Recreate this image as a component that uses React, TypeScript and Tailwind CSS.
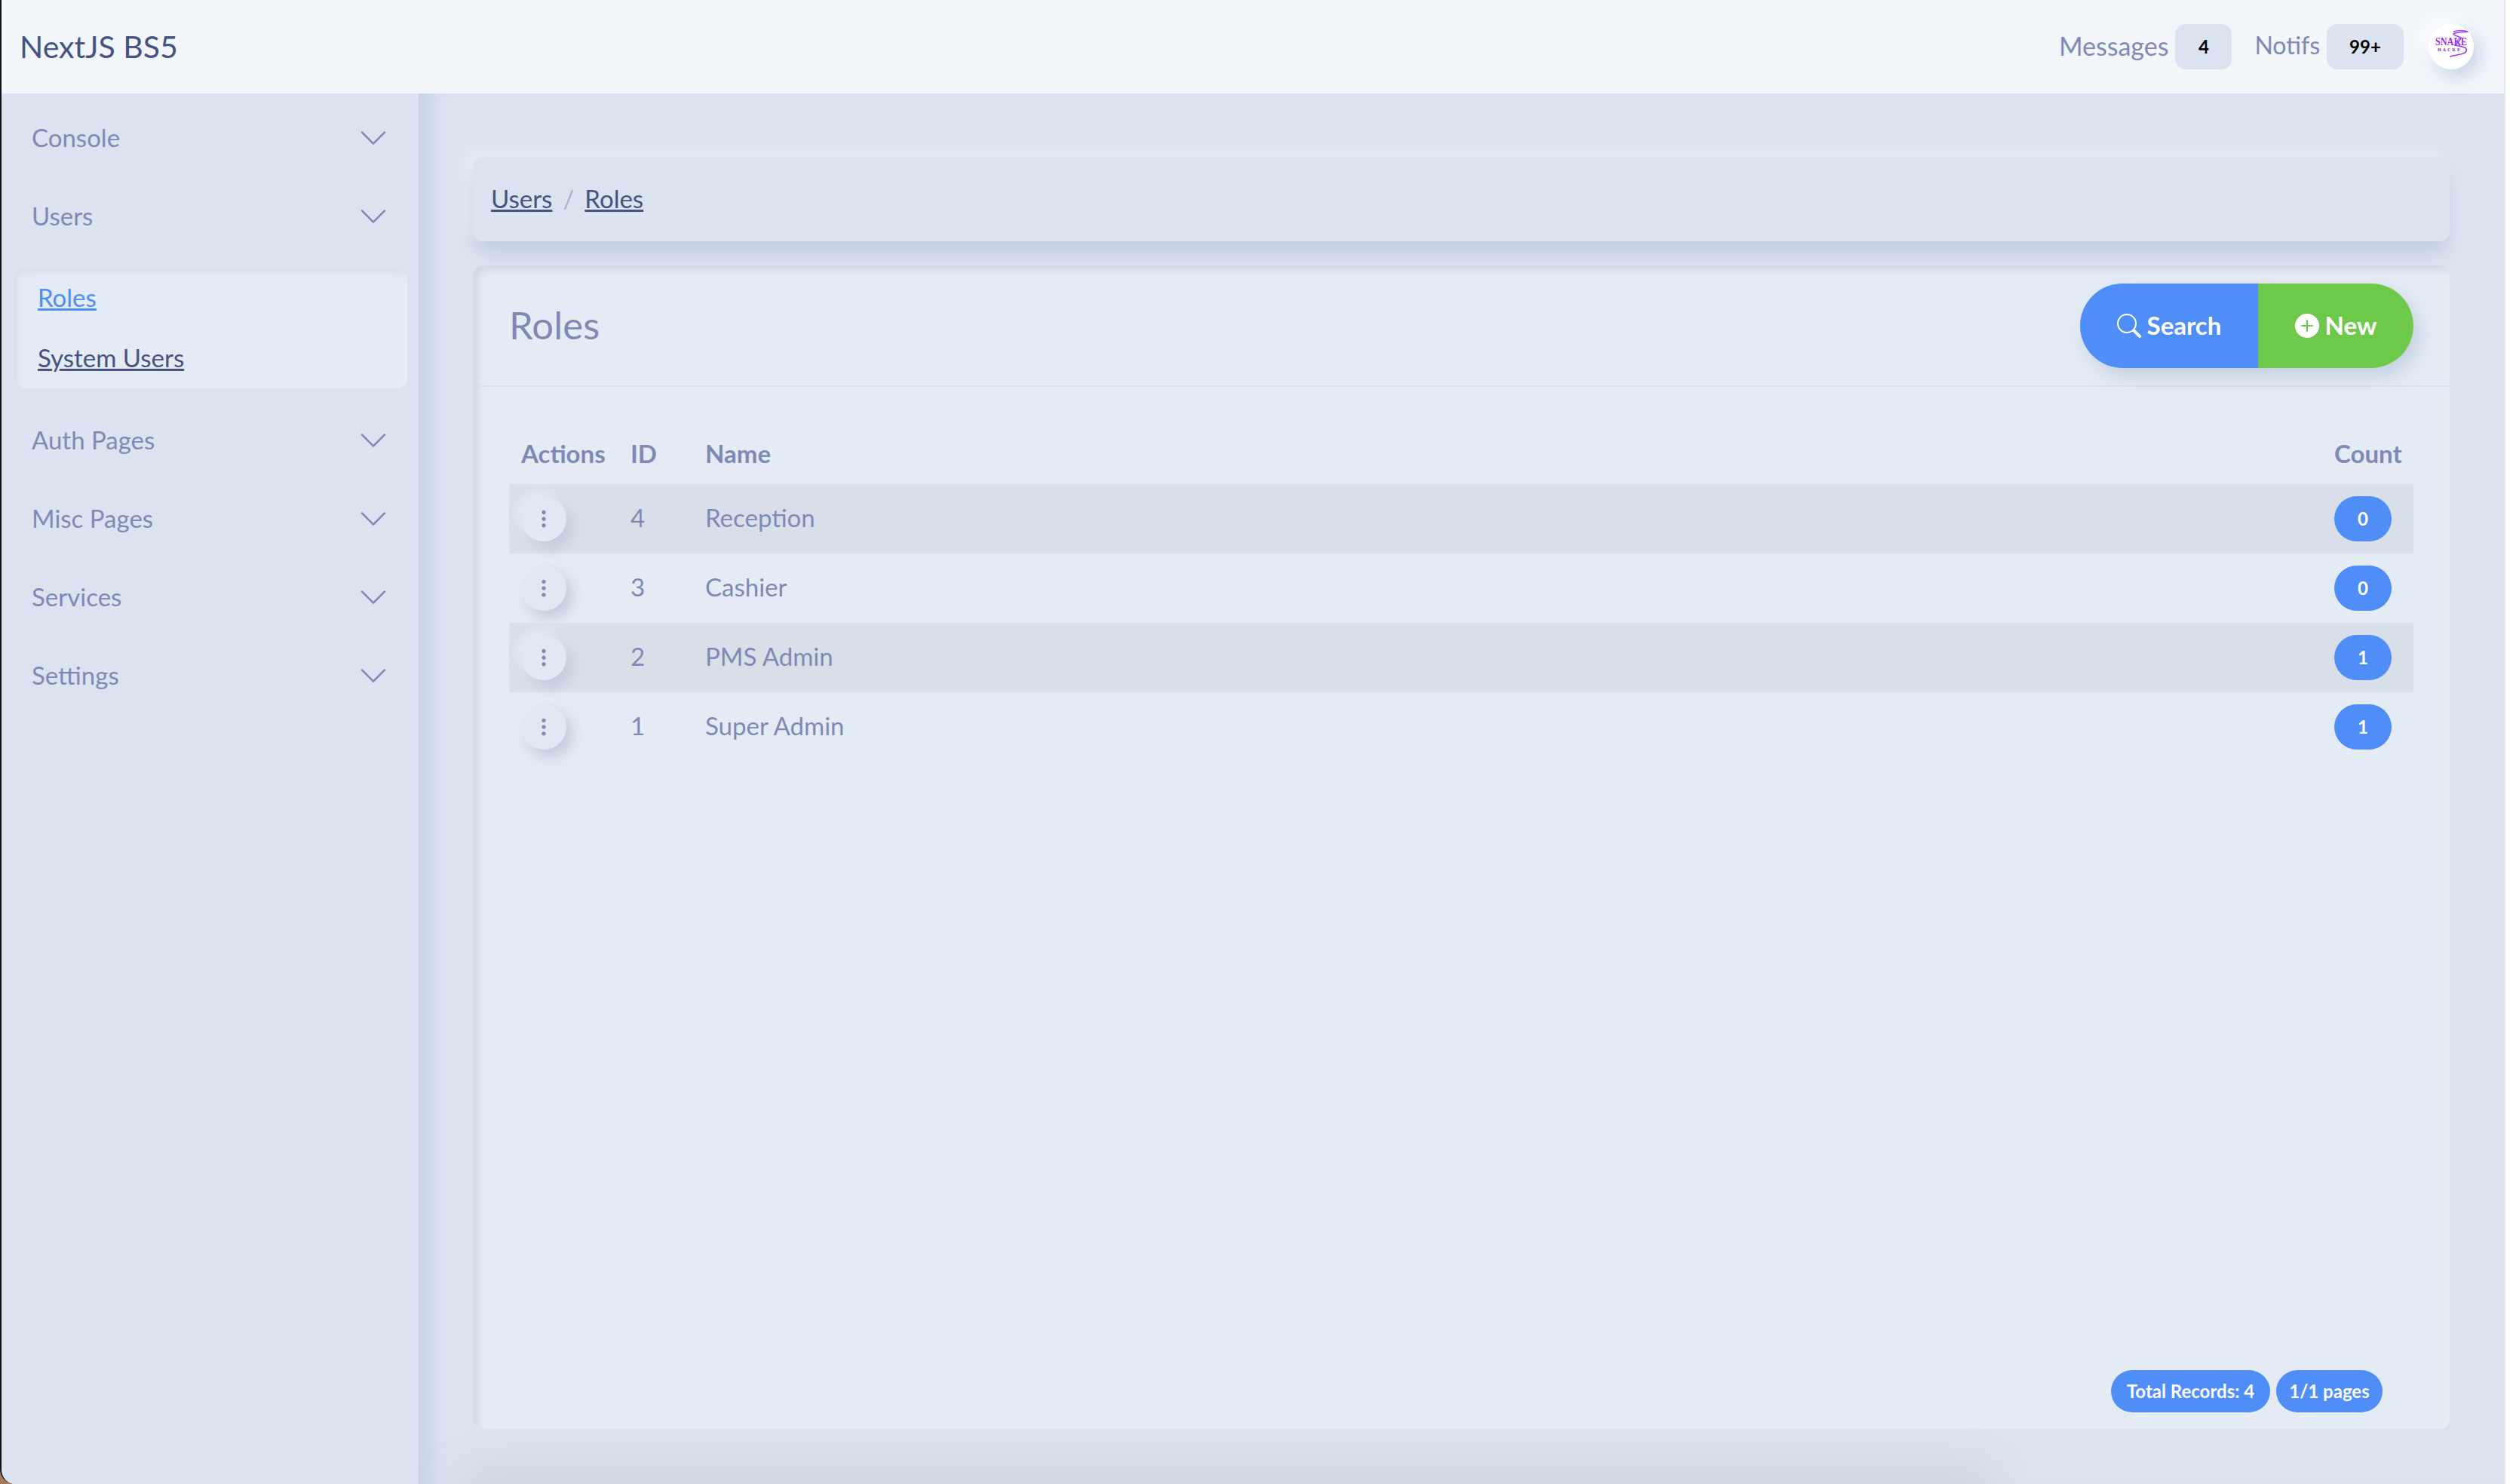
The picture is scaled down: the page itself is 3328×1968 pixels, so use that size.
import React from 'react';
import { BsChevronDown, BsSearch, BsPlusCircleFill, BsThreeDotsVertical } from 'react-icons/bs';

const roles = [
  { id: 4, name: 'Reception', count: 0 },
  { id: 3, name: 'Cashier', count: 0 },
  { id: 2, name: 'PMS Admin', count: 1 },
  { id: 1, name: 'Super Admin', count: 1 },
];

const MenuItem = ({ label }: { label: string }) => (
  <div className="h-[104px] flex items-center justify-between pl-[40px] pr-[40px] text-[33px] text-[#7e8ab5]">
    <span>{label}</span>
    <BsChevronDown size={40} />
  </div>
);

const Avatar = () => (
  <div className="w-[60px] h-[60px] rounded-full bg-white shadow-[8px_10px_24px_#c8d2e4,-8px_-8px_20px_#ffffff] overflow-hidden">
    <svg viewBox="0 0 60 60" className="w-full h-full">
      <text x="9" y="28" textLength="42" lengthAdjust="spacingAndGlyphs" fontFamily="Liberation Serif, serif" fontWeight="700" fontSize="14" fill="#9b30e8">SNAKE</text>
      <text x="12" y="36" textLength="30" fontFamily="Liberation Serif, serif" fontWeight="700" fontSize="6" fill="#7a20c0">HACKE</text>
      <path d="M33 10c6-2 15-2 19 0-5 1-14 0-19 3 0 2 7 3 10 5-1 4-5 7-8 10 6 1 15 2 15 5 1 4-2 6-8 7-4 1-9 2-14 3" fill="none" stroke="#a03cf0" strokeWidth="1.6" />
    </svg>
  </div>
);

export default function App() {
  return (
    <div className="w-[3328px] h-[1968px] bg-[linear-gradient(90deg,#a9795a_50%,#ffffff_50%)] overflow-hidden font-['Lato',sans-serif]">
      <div className="w-[3322px] h-full flex flex-col bg-[#dce3f0] border-l-2 border-r-2 border-l-[#111] border-r-[#e6e7ea] rounded-bl-[20px] overflow-hidden">
        <header className="relative z-10 h-[124px] shrink-0 bg-[#f2f6fb] flex items-center pl-[24px] pr-[40px]">
          <div className="text-[41px] text-[#46527f]">NextJS BS5</div>
          <div className="ml-auto flex items-center text-[#7e8ab5]">
            <span className="pb-[4px] text-[34px]">Messages</span>
            <span className="ml-[9px] w-[75px] h-[60px] rounded-[14px] bg-[#dce3f0] flex items-center justify-center text-[24px] font-bold text-black">4</span>
            <span className="ml-[30px] pb-[4px] text-[32px]">Notifs</span>
            <span className="ml-[9px] w-[102px] h-[60px] rounded-[14px] bg-[#dce3f0] flex items-center justify-center text-[24px] font-bold text-black">99+</span>
            <div className="ml-[33px]"><Avatar /></div>
          </div>
        </header>

        <div className="flex-1 flex min-h-0">
          <aside className="w-[553px] shrink-0 bg-[#dce3f0] pt-[7px]">
            <MenuItem label="Console" />
            <MenuItem label="Users" />
            <div className="ml-[16px] mr-[15px] mt-[17px] mb-[17px] h-[159px] rounded-[14px] bg-[#e4ebf5] shadow-[inset_5px_5px_8px_#d6dde9,inset_-3px_-3px_6px_#e9eef6] pl-[32px] pb-[4px] flex flex-col justify-center gap-[34px] text-[33px] leading-[46px]">
              <a className="underline text-[#4f8df7]">Roles</a>
              <a className="underline text-[#46527f]">System Users</a>
            </div>
            <MenuItem label="Auth Pages" />
            <MenuItem label="Misc Pages" />
            <MenuItem label="Services" />
            <MenuItem label="Settings" />
          </aside>

          <main className="flex-1 min-w-0 overflow-hidden flex flex-col pt-[84px] px-[72px] bg-[#dce3f0] shadow-[inset_34px_0_24px_-16px_#c8d3e5]">
            <div className="h-[112px] shrink-0 rounded-[14px] bg-[#dce3f0] flex items-center pl-[24px] text-[33px] shadow-[0_18px_24px_-4px_#bfcbde,-10px_-10px_20px_#e6ecf5]">
              <a className="underline text-[#46527f]">Users</a>
              <span className="mx-[14px] text-[#a9b2cc]">/</span>
              <a className="underline text-[#46527f]">Roles</a>
            </div>

            <section className="mt-[32px] flex-1 min-h-0 rounded-[14px] bg-[#e4ebf5] shadow-[inset_7px_7px_10px_#d2d9e6,inset_-3px_-3px_6px_#e9eef6] flex flex-col">
              <div className="h-[161px] shrink-0 border-b-2 border-[#d8dfeb] flex items-center justify-between pl-[48px] pr-[48px]">
                <h4 className="text-[51px] text-[#7e8ab5]">Roles</h4>
                <div className="flex h-[112px] rounded-full overflow-hidden shadow-[8px_12px_24px_#c5d0e2] text-white text-[33px] font-bold">
                  <div className="w-[236px] bg-[#4f8df7] flex items-center justify-center gap-[8px]">
                    <BsSearch size={32} />
                    <span>Search</span>
                  </div>
                  <div className="w-[206px] bg-[#6ec94a] flex items-center justify-center gap-[8px]">
                    <BsPlusCircleFill size={32} />
                    <span>New</span>
                  </div>
                </div>
              </div>

              <div className="flex-1 flex flex-col px-[48px] pt-[60px]">
                <table className="w-full border-collapse text-[33px] text-[#7e8ab5]">
                  <thead>
                    <tr className="h-[69px] text-left">
                      <th className="w-[145px] pl-[16px] pb-[12px] font-bold">Actions</th>
                      <th className="w-[115px] pl-[16px] pb-[12px] font-bold">ID</th>
                      <th className="pb-[12px] font-bold">Name</th>
                      <th className="w-[105px] pb-[12px] font-bold">Count</th>
                    </tr>
                  </thead>
                  <tbody>
                    {roles.map((r, i) => (
                      <tr key={r.id} className={`h-[92px] ${i % 2 === 0 ? 'bg-[#d8dfe9]' : ''}`}>
                        <td className="pl-[16px]">
                          <div className="w-[60px] h-[60px] rounded-full bg-[#e1e8f3] flex items-center justify-center shadow-[8px_10px_18px_#c0cbdd,-6px_-6px_14px_#e6ecf5]">
                            <BsThreeDotsVertical size={28} />
                          </div>
                        </td>
                        <td className="pl-[16px] pb-[2px]">{r.id}</td>
                        <td className="pb-[2px]">{r.name}</td>
                        <td>
                          <div className="w-[76px] h-[60px] rounded-full bg-[#4f8df7] flex items-center justify-center text-[24px] font-bold text-white">{r.count}</div>
                        </td>
                      </tr>
                    ))}
                  </tbody>
                </table>

                <div className="mt-auto mb-[22px] flex justify-end gap-[8px] pr-[41px] text-[24px] font-bold text-white">
                  <span className="h-[56px] w-[211px] rounded-full bg-[#4f8df7] flex items-center justify-center">Total Records: 4</span>
                  <span className="h-[56px] w-[141px] rounded-full bg-[#4f8df7] flex items-center justify-center">1/1 pages</span>
                </div>
              </div>
            </section>

            <div className="mt-[73px] mb-[-10px] h-[10px] w-[2000px] shrink-0 bg-[#c4cad8] shadow-[0_0_64px_14px_#c4cad8]" />
          </main>
        </div>
      </div>
    </div>
  );
}
